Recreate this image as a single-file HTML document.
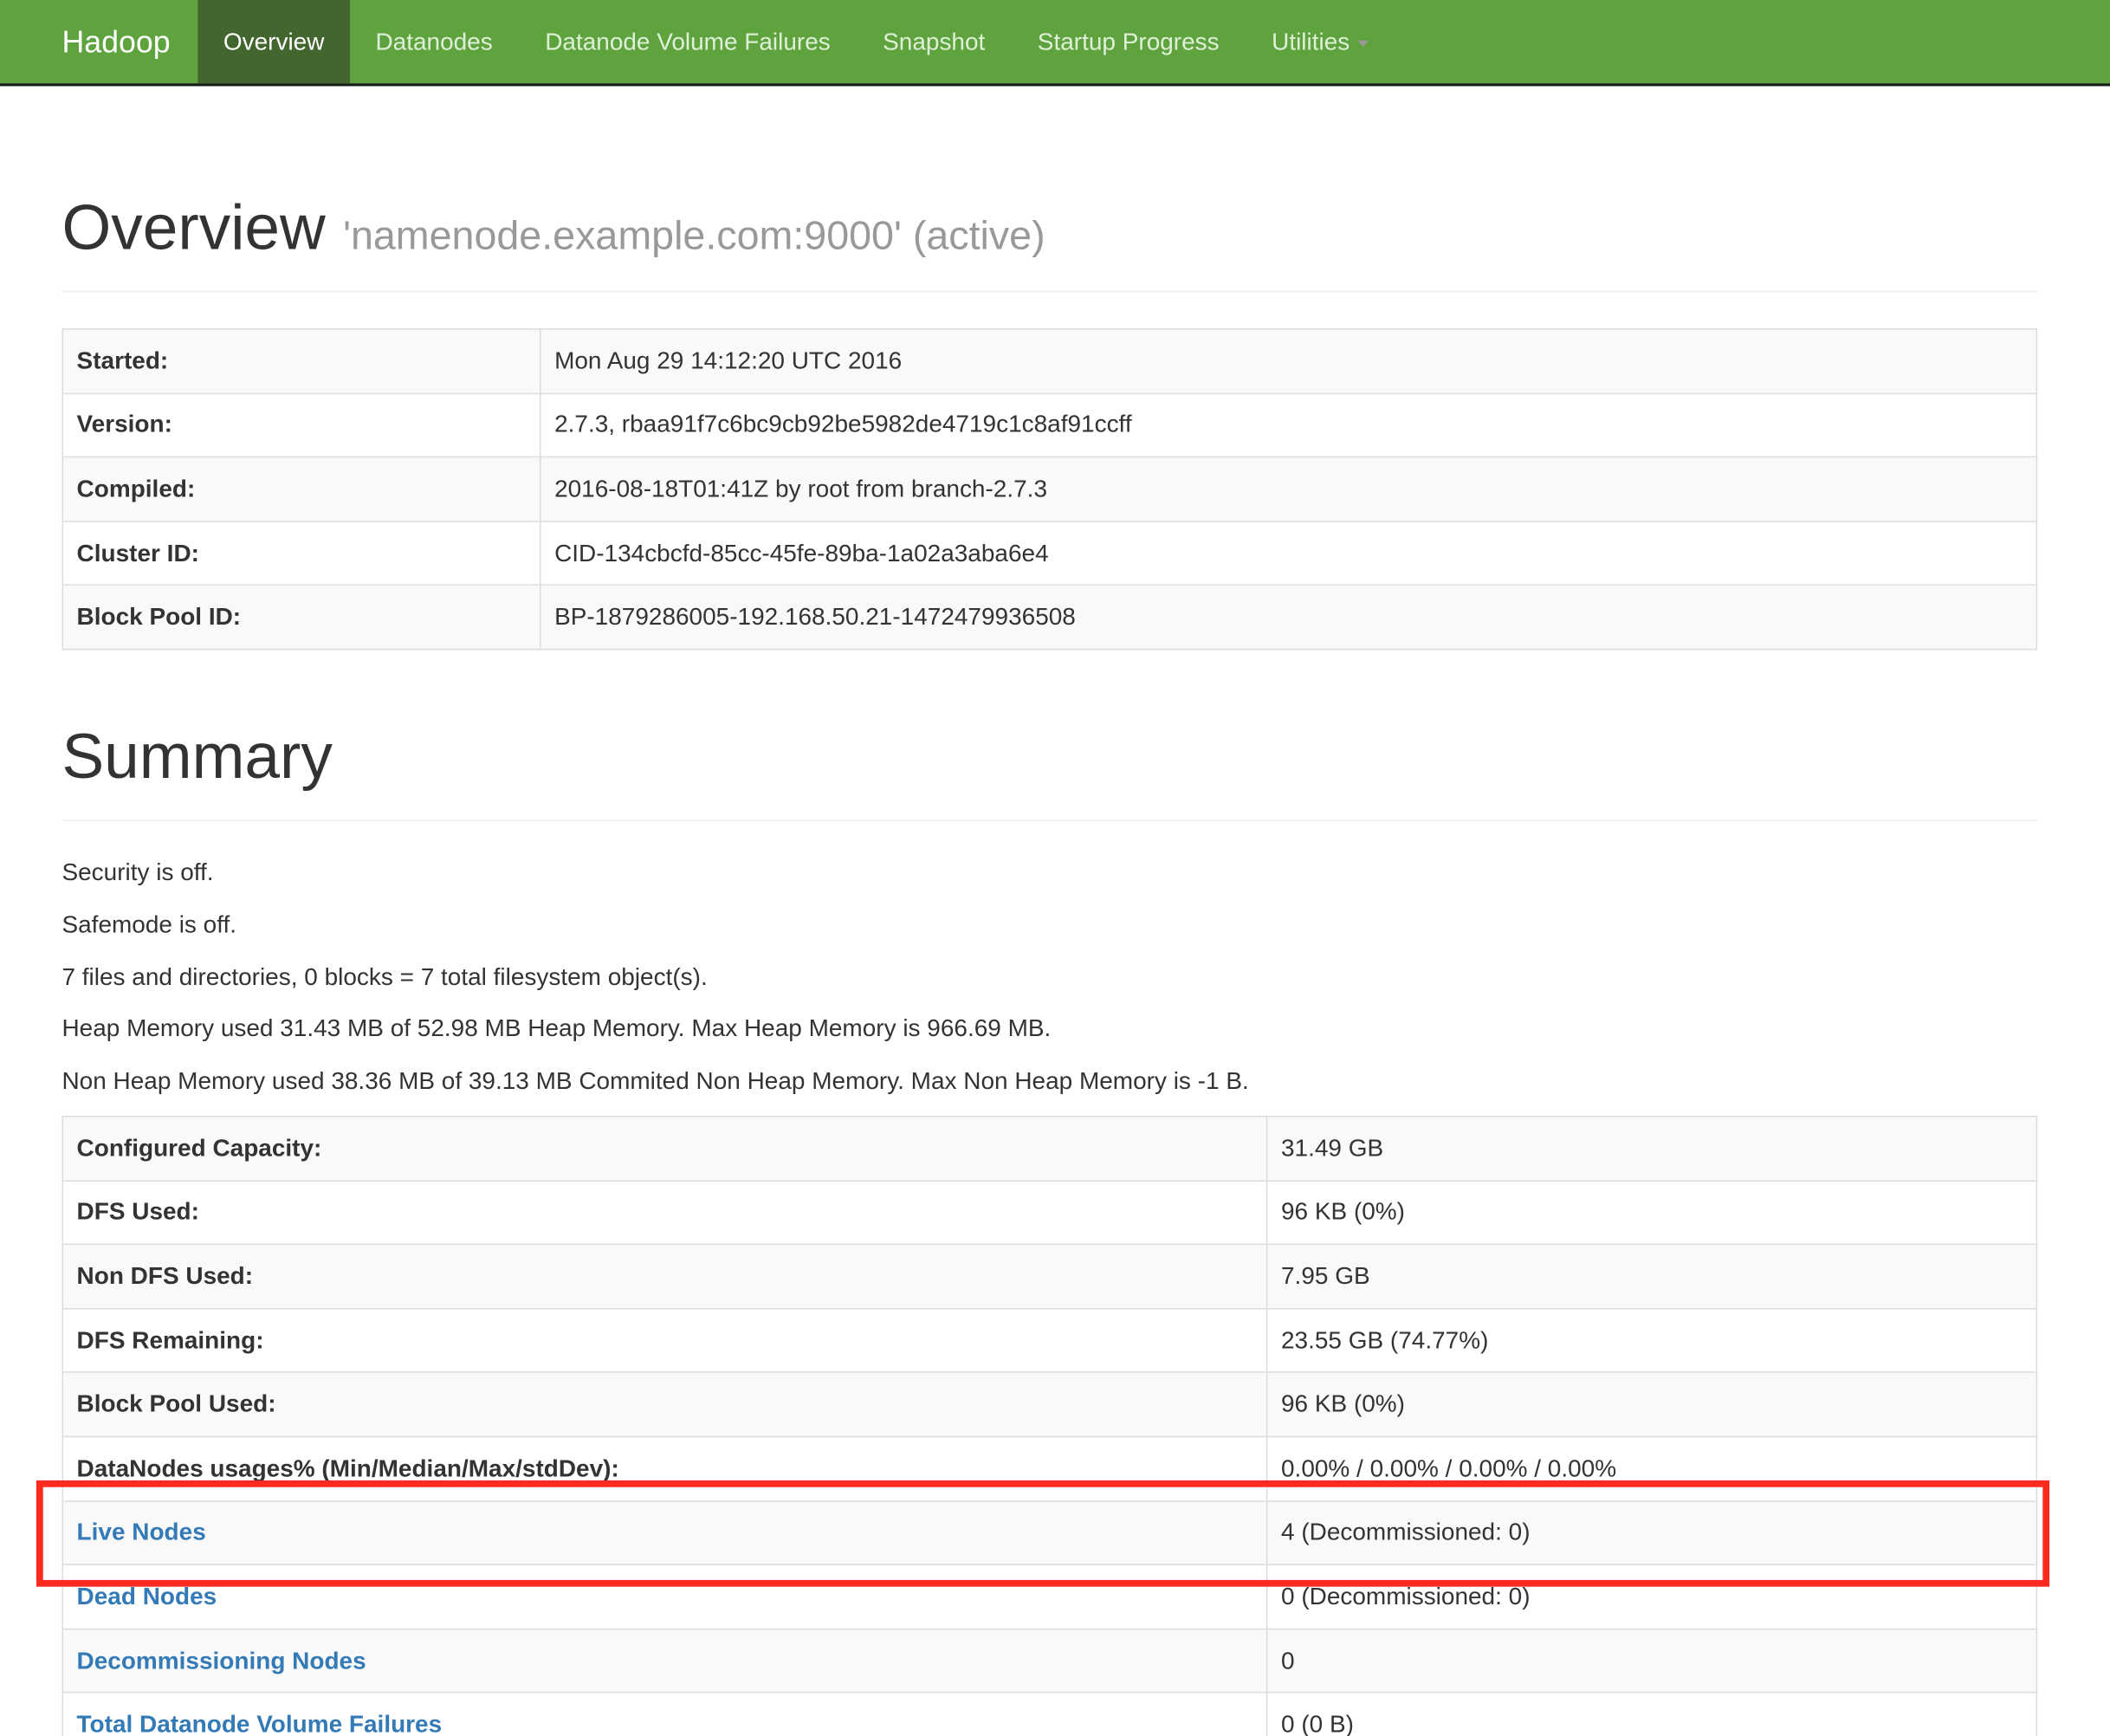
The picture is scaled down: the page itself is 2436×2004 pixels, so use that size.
<!DOCTYPE html>
<html><head><meta charset="utf-8"><style>
html,body{margin:0;padding:0;background:#fff;overflow:hidden;}
body{width:2436px;height:2004px;}
#w{width:1568px;height:1290px;transform:scale(1.553571);transform-origin:0 0;position:relative;font-family:"Liberation Sans",Arial,sans-serif;color:#333;font-size:18px;}
.nav{position:absolute;left:0;top:0;width:1568px;height:62px;background:#5fa33e;border-bottom:2px solid #1a1a1a;}
.nav span{position:absolute;top:0;line-height:62px;color:#dff0d8;font-size:18px;}
.nav .brand{left:46px;color:#fff;font-size:23px;}
.nav .act{left:147px;width:113px;background:#43662f;color:#fff;text-align:center;}
.caret{display:inline-block;width:0;height:0;border-left:4px solid transparent;border-right:4px solid transparent;border-top:5px solid #999;vertical-align:middle;margin-left:6px;}
h1{position:absolute;left:46px;margin:0;font-weight:500;font-size:47px;line-height:50px;color:#333;}
h1 small{font-size:30px;color:#999;font-weight:400;margin-left:0px;}
.hr{position:absolute;left:46px;width:1468px;height:1px;background:#eee;}
table{position:absolute;left:46px;width:1468px;border-collapse:collapse;}
td{border:1px solid #ddd;height:47.6px;padding:0 0 0 10px;vertical-align:middle;font-size:18px;box-sizing:border-box;}
tr:nth-child(odd) td{background:#f9f9f9;}
td.k{font-weight:bold;}
a{color:#337ab7;text-decoration:none;font-weight:bold;}
p{position:absolute;left:46px;margin:0;font-size:18px;}
.red{position:absolute;left:27px;top:1100px;width:1486px;height:69px;border:5px solid #ff2a1f;}
</style></head><body><div id="w">
<div class="nav">
<span class="brand">Hadoop</span>
<span class="act">Overview</span>
<span style="left:279px">Datanodes</span>
<span style="left:405px">Datanode Volume Failures</span>
<span style="left:656px">Snapshot</span>
<span style="left:771px">Startup Progress</span>
<span style="left:945px">Utilities<i class="caret"></i></span>
</div>
<h1 style="top:144px">Overview <small>'namenode.example.com:9000' (active)</small></h1>
<div class="hr" style="top:216px"></div>
<table style="top:244px">
<tr><td class="k" style="width:355px">Started:</td><td>Mon Aug 29 14:12:20 UTC 2016</td></tr>
<tr><td class="k">Version:</td><td>2.7.3, rbaa91f7c6bc9cb92be5982de4719c1c8af91ccff</td></tr>
<tr><td class="k">Compiled:</td><td>2016-08-18T01:41Z by root from branch-2.7.3</td></tr>
<tr><td class="k">Cluster ID:</td><td>CID-134cbcfd-85cc-45fe-89ba-1a02a3aba6e4</td></tr>
<tr><td class="k">Block Pool ID:</td><td>BP-1879286005-192.168.50.21-1472479936508</td></tr>
</table>
<h1 style="top:537px">Summary</h1>
<div class="hr" style="top:609px"></div>
<p style="top:638px">Security is off.</p>
<p style="top:677px">Safemode is off.</p>
<p style="top:716px">7 files and directories, 0 blocks = 7 total filesystem object(s).</p>
<p style="top:754px">Heap Memory used 31.43 MB of 52.98 MB Heap Memory. Max Heap Memory is 966.69 MB.</p>
<p style="top:793px">Non Heap Memory used 38.36 MB of 39.13 MB Commited Non Heap Memory. Max Non Heap Memory is -1 B.</p>
<table style="top:829px">
<tr><td class="k" style="width:895px">Configured Capacity:</td><td>31.49 GB</td></tr>
<tr><td class="k">DFS Used:</td><td>96 KB (0%)</td></tr>
<tr><td class="k">Non DFS Used:</td><td>7.95 GB</td></tr>
<tr><td class="k">DFS Remaining:</td><td>23.55 GB (74.77%)</td></tr>
<tr><td class="k">Block Pool Used:</td><td>96 KB (0%)</td></tr>
<tr><td class="k">DataNodes usages% (Min/Median/Max/stdDev):</td><td>0.00% / 0.00% / 0.00% / 0.00%</td></tr>
<tr><td><a>Live Nodes</a></td><td>4 (Decommissioned: 0)</td></tr>
<tr><td><a>Dead Nodes</a></td><td>0 (Decommissioned: 0)</td></tr>
<tr><td><a>Decommissioning Nodes</a></td><td>0</td></tr>
<tr><td><a>Total Datanode Volume Failures</a></td><td>0 (0 B)</td></tr>
</table>
<div class="red"></div>
</div></body></html>
